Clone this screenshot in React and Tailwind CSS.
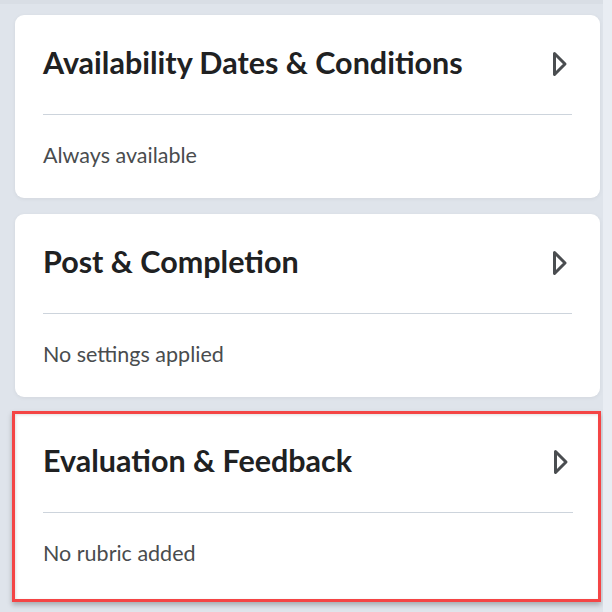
import React from "react";

function Chevron() {
  return (
    <svg width="18" height="28" viewBox="0 0 18 28" className="shrink-0">
      <path d="M3.5 3.5 L14 14 L3.5 24.5 Z" fill="none" stroke="#4a4d50" strokeWidth="3" strokeLinejoin="round" />
    </svg>
  );
}

function Card({ title, text, highlight }) {
  return (
    <div
      className={
        "bg-white pl-[28px] " +
        (highlight
          ? "pr-[25px] -mr-[1px] border-[3px] border-[#f44545] pt-[27px] pb-[32px] -mt-[2px] -ml-[3px] shadow-[0_3px_5px_rgba(0,0,0,0.25),inset_1px_1px_3px_rgba(0,0,0,0.12)]"
          : "pr-[28px] pt-[28px] pb-[29px] rounded-[9px] shadow-[0_1px_4px_rgba(0,0,0,0.06)]")
      }
    >
      <div className="flex items-center justify-between h-[38px]">
        <span className="text-[30.5px] leading-[38px] font-bold text-[#202122]">{title}</span>
        <div className="mr-[3px] mt-[3px]">
          <Chevron />
        </div>
      </div>
      <div className="mt-[33px] h-px bg-[#cdd4dc]" />
      <div className="mt-[26px] text-[21.5px] leading-[28px] text-[#494c4e]">{text}</div>
    </div>
  );
}

export default function App() {
  return (
    <div
      className="w-[612px] h-[612px] flex bg-[#dfe4eb] overflow-hidden"
      style={{ fontFamily: "Lato, 'Open Sans', sans-serif" }}
    >
      <div className="w-[603px] flex flex-col">
        <div className="h-[4px] bg-[#d9dee5]" />
        <div className="flex flex-col gap-[16px] pl-[15px] pr-[3px] pt-[11px]">
          <Card title="Availability Dates & Conditions" text="Always available" />
          <Card title="Post & Completion" text="No settings applied" />
          <Card title="Evaluation & Feedback" text="No rubric added" highlight />
        </div>
      </div>
      <div className="w-[9px] bg-[#e9edf3]" />
    </div>
  );
}
